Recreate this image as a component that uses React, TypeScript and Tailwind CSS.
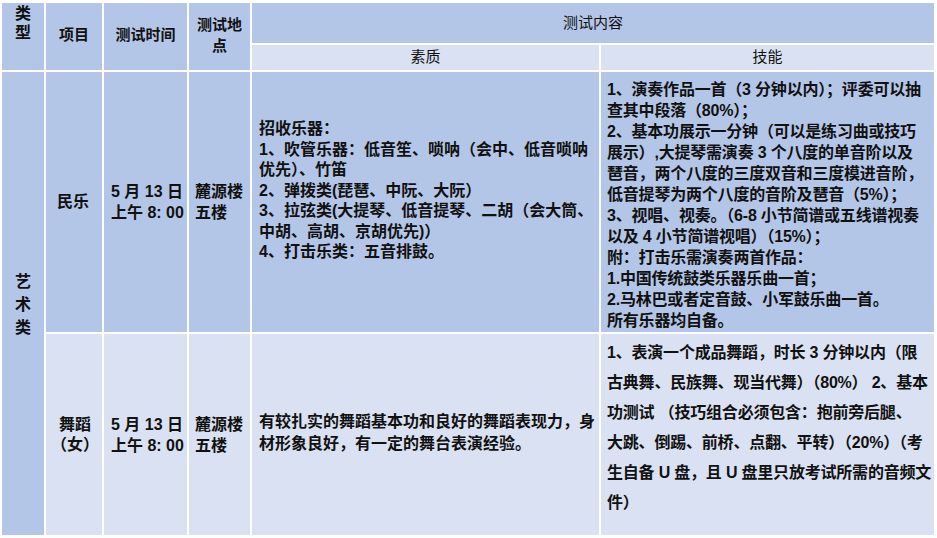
import React from "react";

const MID = "bg-[#b4c6e7]";
const LIGHT = "bg-[#d9e1f2]";

function Lines({ lines }: { lines: string[] }) {
  return (
    <>
      {lines.map((l, i) => (
        <div key={i} className="whitespace-nowrap">
          {l}
        </div>
      ))}
    </>
  );
}

export default function App() {
  const font = {
    fontFamily: '"Liberation Sans", "Noto Sans CJK SC", "Noto Sans", sans-serif',
  };
  return (
    <div
      className="w-[937px] h-[538px] bg-white pl-[2px] pt-[3px] text-[#111] overflow-hidden"
      style={font}
    >
      <div className="grid grid-cols-[42px_56px_83px_61px_347px_333px] grid-rows-[40px_25px_260px_201px] gap-[2px]">
        {/* header */}
        <div className={`${MID} row-span-2 flex flex-col items-center pt-[1px] text-[16px] leading-[19px] font-bold`}>
          <div>类</div>
          <div>型</div>
        </div>
        <div className={`${MID} row-span-2 flex items-center justify-center text-[15px] font-bold pb-[2px]`}>
          项目
        </div>
        <div className={`${MID} row-span-2 flex items-center justify-center text-[15px] font-bold pb-[2px]`}>
          测试时间
        </div>
        <div className={`${MID} row-span-2 flex flex-col items-center justify-center text-[15px] font-bold leading-[21px] pb-[3px]`}>
          <div>测试地</div>
          <div>点</div>
        </div>
        <div className={`${MID} col-span-2 flex items-center justify-center text-[15px]`}>
          测试内容
        </div>
        <div className={`${LIGHT} flex items-center justify-center text-[15px]`}>素质</div>
        <div className={`${LIGHT} flex items-center justify-center text-[15px]`}>技能</div>

        {/* 艺术类 */}
        <div className={`${MID} row-span-2 flex flex-col items-center justify-center text-[16px] leading-[23px] font-semibold pt-[2px]`}>
          <div>艺</div>
          <div>术</div>
          <div>类</div>
        </div>

        {/* 民乐 row */}
        <div className={`${MID} flex items-center justify-center text-[16px] font-semibold pr-[2px]`}>
          民乐
        </div>
        <div className={`${MID} flex flex-col justify-center pl-[7px] text-[16px] leading-[21px] font-semibold`}>
          <div className="whitespace-nowrap">5 月 13 日</div>
          <div className="whitespace-nowrap">上午 8: 00</div>
        </div>
        <div className={`${MID} flex flex-col justify-center pl-[6px] text-[16px] leading-[21px] font-semibold`}>
          <div>麓源楼</div>
          <div>五楼</div>
        </div>
        <div className={`${MID} pl-[7px] pt-[47px] text-[16px] leading-[20.5px] font-semibold`}>
          <Lines
            lines={[
              "招收乐器：",
              "1、吹管乐器：低音笙、唢呐（会中、低音唢呐",
              "优先）、竹笛",
              "2、弹拨类(琵琶、中阮、大阮）",
              "3、拉弦类(大提琴、低音提琴、二胡（会大筒、",
              "中胡、高胡、京胡优先)）",
              "4、打击乐类：五音排鼓。",
            ]}
          />
        </div>
        <div className={`${MID} pl-[6px] pt-[7px] text-[16px] leading-[21px] font-semibold tracking-[-0.2px]`}>
          <Lines
            lines={[
              "1、演奏作品一首（3 分钟以内）；评委可以抽",
              "查其中段落（80%）；",
              "2、基本功展示一分钟（可以是练习曲或技巧",
              "展示）,大提琴需演奏 3 个八度的单音阶以及",
              "琶音，两个八度的三度双音和三度模进音阶，",
              "低音提琴为两个八度的音阶及琶音（5%）；",
              "3、视唱、视奏。（6-8 小节简谱或五线谱视奏",
              "以及 4 小节简谱视唱）（15%）；",
              "附：打击乐需演奏两首作品：",
              "1.中国传统鼓类乐器乐曲一首；",
              "2.马林巴或者定音鼓、小军鼓乐曲一首。",
              "所有乐器均自备。",
            ]}
          />
        </div>

        {/* 舞蹈 row */}
        <div className={`${LIGHT} flex flex-col items-center justify-center text-[16px] leading-[20px] font-semibold pl-[2px]`}>
          <div>舞蹈</div>
          <div className="whitespace-nowrap">（女）</div>
        </div>
        <div className={`${LIGHT} flex flex-col justify-center pl-[7px] text-[16px] leading-[21px] font-semibold`}>
          <div className="whitespace-nowrap">5 月 13 日</div>
          <div className="whitespace-nowrap">上午 8: 00</div>
        </div>
        <div className={`${LIGHT} flex flex-col justify-center pl-[6px] text-[16px] leading-[21px] font-semibold`}>
          <div>麓源楼</div>
          <div>五楼</div>
        </div>
        <div className={`${LIGHT} flex flex-col justify-center pl-[7px] pb-[4px] text-[16px] leading-[22px] font-semibold`}>
          <Lines
            lines={[
              "有较扎实的舞蹈基本功和良好的舞蹈表现力，身",
              "材形象良好，有一定的舞台表演经验。",
            ]}
          />
        </div>
        <div className={`${LIGHT} pl-[6px] pt-[4px] text-[16px] leading-[30px] font-semibold tracking-[-0.2px]`}>
          <Lines
            lines={[
              "1、表演一个成品舞蹈，时长 3 分钟以内（限",
              "古典舞、民族舞、现当代舞）（80%） 2、基本",
              "功测试 （技巧组合必须包含：抱前旁后腿、",
              "大跳、倒踢、前桥、点翻、平转）（20%）（考",
              "生自备 U 盘，且 U 盘里只放考试所需的音频文",
              "件）",
            ]}
          />
        </div>
      </div>
    </div>
  );
}
